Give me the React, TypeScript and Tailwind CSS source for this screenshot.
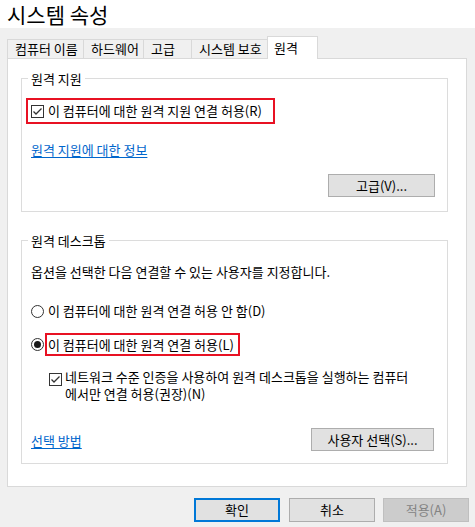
import React from 'react';

const CheckBox: React.FC = () => (
  <svg width="13" height="13" viewBox="0 0 13 13" className="shrink-0">
    <rect x="0.5" y="0.5" width="12" height="12" fill="#ffffff" stroke="#333333" />
    <path d="M2.5 6.5 L5 9 L10.5 3.5" fill="none" stroke="#333333" strokeWidth="1.3" />
  </svg>
);

const Radio: React.FC<{ checked?: boolean }> = ({ checked }) => (
  <svg width="13" height="13" viewBox="0 0 13 13" className="shrink-0">
    <circle cx="6.5" cy="6.5" r="6" fill="#ffffff" stroke="#333333" />
    {checked && <circle cx="6.5" cy="6.5" r="3.5" fill="#1a1a1a" />}
  </svg>
);

const tabs = [
  { label: '컴퓨터 이름', w: 'w-[76px]' },
  { label: '하드웨어', w: 'w-[60px]' },
  { label: '고급', w: 'w-[48px]' },
  { label: '시스템 보호', w: 'w-[76px]' },
];

export default function App() {
  return (
    <div className="w-[475px] h-[527px] overflow-hidden bg-[#f0f0f0] text-black text-[13px] leading-[16px] font-['Noto_Sans_CJK_KR','Noto_Sans',sans-serif]">
      {/* Title */}
      <div className="h-[28px] bg-white pl-[7px] text-[21px] leading-[28px]">시스템 속성</div>

      {/* Tabs */}
      <div className="flex items-end h-[30px] pt-[8px] pl-[7px]">
        {tabs.map((t) => (
          <div
            key={t.label}
            className={`${t.w} h-[19px] flex items-center pl-[7px] border-l border-t border-[#d9d9d9] bg-[#f0f0f0] whitespace-nowrap`}
          >
            {t.label}
          </div>
        ))}
        <div className="relative z-10 w-[51px] h-[23px] -mb-px flex items-center pl-[6px] border-l border-t border-r border-[#d9d9d9] bg-white">
          원격
        </div>
      </div>

      {/* Tab panel */}
      <div className="ml-[7px] w-[460px] h-[429px] border border-[#d9d9d9] bg-white pt-[11px] pl-[13px]">
        {/* 원격 지원 */}
        <fieldset className="w-[427px] border border-[#dcdcdc] pb-[14px] flex flex-col">
          <legend className="ml-[6px] px-[3px] leading-[17px]">원격 지원</legend>
          <div className="mt-[11px] ml-[4px] w-[249px] h-[26px] border-2 border-[#e81123] flex items-center pl-[3px]">
            <CheckBox />
            <span className="ml-[4px] whitespace-nowrap">이 컴퓨터에 대한 원격 지원 연결 허용(R)</span>
          </div>
          <a href="#" className="mt-[18px] ml-[9px] self-start text-[#0066cc] underline underline-offset-2">
            원격 지원에 대한 정보
          </a>
          <button className="mt-[16px] mr-[12px] self-end w-[107px] h-[23px] bg-[#e1e1e1] border border-[#adadad]">
            고급(V)...
          </button>
        </fieldset>

        {/* 원격 데스크톱 */}
        <fieldset className="mt-[20px] w-[427px] border border-[#dcdcdc] pb-[12px] flex flex-col">
          <legend className="ml-[6px] px-[3px] leading-[17px]">원격 데스크톱</legend>
          <p className="mt-[15px] ml-[9px]">옵션을 선택한 다음 연결할 수 있는 사용자를 지정합니다.</p>

          <div className="mt-[23px] ml-[9px] flex items-center">
            <Radio />
            <span className="ml-[4px]">이 컴퓨터에 대한 원격 연결 허용 안 함(D)</span>
          </div>

          <div className="mt-[14px] ml-[9px] flex items-center">
            <Radio checked />
            <div className="ml-[1px] w-[195px] h-[23px] border-2 border-[#e81123] flex items-center pl-[1px] whitespace-nowrap">
              이 컴퓨터에 대한 원격 연결 허용(L)
            </div>
          </div>

          <div className="mt-[12px] ml-[27px] flex items-start">
            <div className="mt-[5px]">
              <CheckBox />
            </div>
            <div className="ml-[3px] whitespace-nowrap leading-[17px]">
              <div>네트워크 수준 인증을 사용하여 원격 데스크톱을 실행하는 컴퓨터</div>
              <div>에서만 연결 허용(권장)(N)</div>
            </div>
          </div>

          <div className="mt-[26px] ml-[9px] mr-[13px] flex items-center justify-between">
            <a href="#" className="mt-[3px] text-[#0066cc] underline underline-offset-2">
              선택 방법
            </a>
            <button className="w-[123px] h-[23px] bg-[#e1e1e1] border border-[#adadad]">
              사용자 선택(S)...
            </button>
          </div>
        </fieldset>
      </div>

      {/* Dialog buttons */}
      <div className="mt-[11px] pl-[194px] flex">
        <button className="w-[86px] h-[24px] bg-[#e1e1e1] border-2 border-[#0078d7]">확인</button>
        <button className="ml-[9px] w-[86px] h-[24px] bg-[#e1e1e1] border border-[#adadad]">취소</button>
        <button className="ml-[8px] w-[86px] h-[24px] bg-[#cccccc] border border-[#bfbfbf] text-[#838383]">
          적용(A)
        </button>
      </div>
    </div>
  );
}
